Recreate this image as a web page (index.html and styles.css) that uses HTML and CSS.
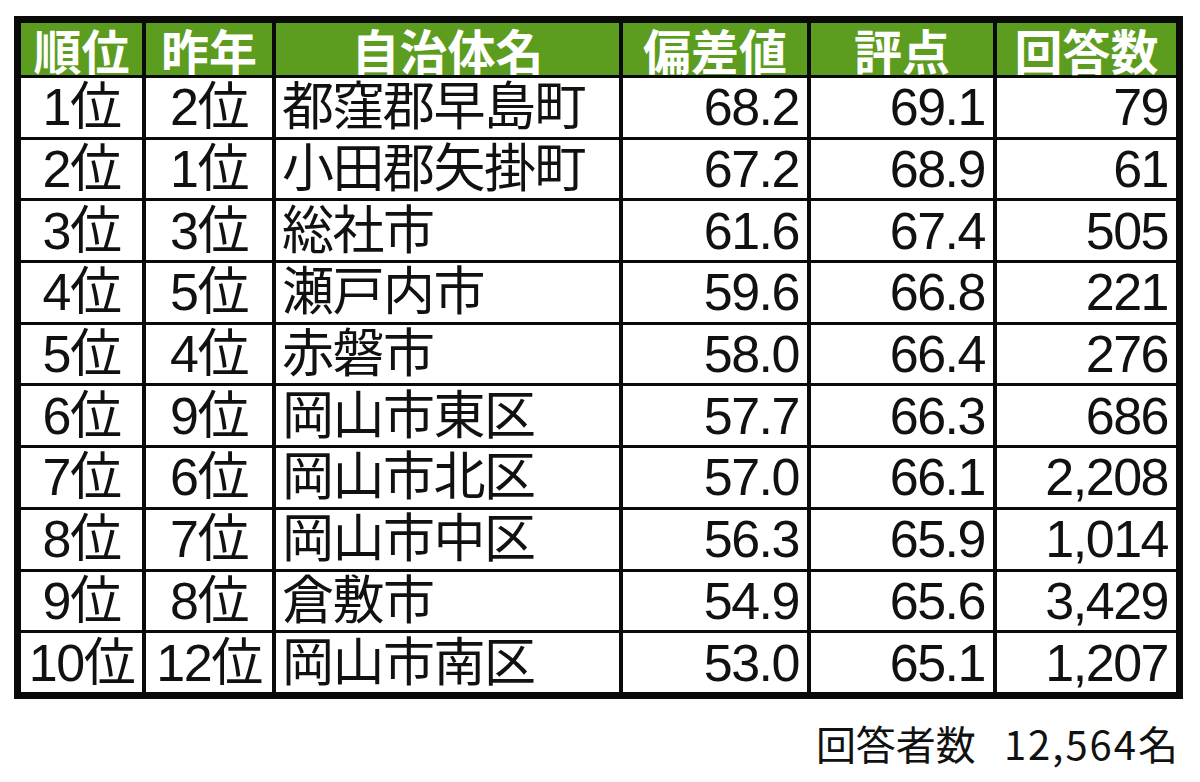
FILE: index.html
```html
<!DOCTYPE html>
<html lang="ja">
<head>
<meta charset="utf-8">
<title>ランキング</title>
<link rel="stylesheet" href="styles.css">
</head>
<body>
<div class="page">
  <div class="table">
    <div class="th">順位</div><div class="th">昨年</div><div class="th">自治体名</div><div class="th">偏差値</div><div class="th">評点</div><div class="th">回答数</div>

    <div class="td c">1位</div><div class="td c">2位</div><div class="td l">都窪郡早島町</div><div class="td r">68.2</div><div class="td r">69.1</div><div class="td r">79</div>
    <div class="td c">2位</div><div class="td c">1位</div><div class="td l">小田郡矢掛町</div><div class="td r">67.2</div><div class="td r">68.9</div><div class="td r">61</div>
    <div class="td c">3位</div><div class="td c">3位</div><div class="td l">総社市</div><div class="td r">61.6</div><div class="td r">67.4</div><div class="td r">505</div>
    <div class="td c">4位</div><div class="td c">5位</div><div class="td l">瀬戸内市</div><div class="td r">59.6</div><div class="td r">66.8</div><div class="td r">221</div>
    <div class="td c">5位</div><div class="td c">4位</div><div class="td l">赤磐市</div><div class="td r">58.0</div><div class="td r">66.4</div><div class="td r">276</div>
    <div class="td c">6位</div><div class="td c">9位</div><div class="td l">岡山市東区</div><div class="td r">57.7</div><div class="td r">66.3</div><div class="td r">686</div>
    <div class="td c">7位</div><div class="td c">6位</div><div class="td l">岡山市北区</div><div class="td r">57.0</div><div class="td r">66.1</div><div class="td r">2,208</div>
    <div class="td c">8位</div><div class="td c">7位</div><div class="td l">岡山市中区</div><div class="td r">56.3</div><div class="td r">65.9</div><div class="td r">1,014</div>
    <div class="td c">9位</div><div class="td c">8位</div><div class="td l">倉敷市</div><div class="td r">54.9</div><div class="td r">65.6</div><div class="td r">3,429</div>
    <div class="td c">10位</div><div class="td c">12位</div><div class="td l">岡山市南区</div><div class="td r">53.0</div><div class="td r">65.1</div><div class="td r">1,207</div>
  </div>
  <div class="footer"><span>回答者数</span><span class="count">12,564名</span></div>
</div>
</body>
</html>
```

FILE: styles.css
```css
html, body {
  margin: 0;
  padding: 0;
  background: #ffffff;
}

.page {
  width: 1200px;
  height: 782px;
  padding: 16px 0 0 14px;
  box-sizing: border-box;
}

.table {
  display: grid;
  width: max-content;
  grid-template-columns: 121px 126px 343px 184px 182px 179px;
  grid-template-rows: 52px repeat(10, 58.7px);
  column-gap: 4px;
  row-gap: 3px;
  padding: 7px;
  background: #0a0a0a;
}

.th {
  background: #5c9c1f;
  color: #ffffff;
  font-family: "Noto Sans CJK JP", sans-serif;
  font-weight: 700;
  font-size: 48px;
  line-height: 52px;
  height: 52px;
  text-align: center;
  white-space: nowrap;
  margin-bottom: 3px;
}

.td {
  background: #ffffff;
  color: #111111;
  font-family: "Liberation Sans", "Noto Sans CJK JP", sans-serif;
  font-size: 52px;
  letter-spacing: -1.5px;
  line-height: 56px;
  display: flex;
  align-items: center;
  white-space: nowrap;
}

.td.c {
  justify-content: center;
}

.td.l {
  justify-content: flex-start;
  padding-left: 6px;
}

.td.r {
  justify-content: flex-end;
  padding-right: 8px;
}

.footer {
  display: flex;
  justify-content: flex-end;
  gap: 28px;
  padding-right: 20px;
  margin-top: 24px;
  font-family: "Noto Sans CJK JP", sans-serif;
  font-size: 40px;
  line-height: 40px;
  color: #111111;
}

.footer .count {
  letter-spacing: 2px;
}
```
